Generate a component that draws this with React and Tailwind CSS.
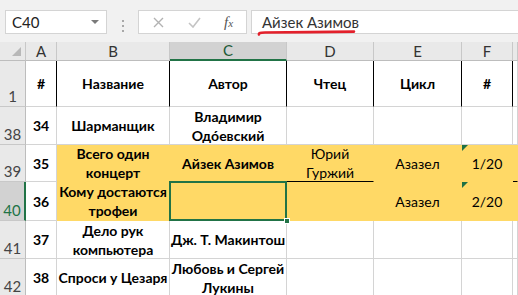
import React from "react";

const FONT = { fontFamily: "Lato, 'Liberation Sans', sans-serif" };

const Cell = ({ children, bold, yellow, r, b, className = "" }) => (
  <div
    className={`flex items-center justify-center text-center whitespace-nowrap text-[14px] leading-[19px] text-black border-r border-b ${
      yellow ? "bg-[#ffd966]" : "bg-white"
    } ${bold ? "font-bold" : "font-normal"} ${r} ${b} ${className}`}
  >
    {children}
  </div>
);

const ColHead = ({ children, active }) => (
  <div
    className={`flex items-center justify-center text-[15px] border-r border-r-[#c8c8c8] ${
      active
        ? "bg-[#d2d2d2] border-b-2 border-b-[#217346] text-[#1c5a36]"
        : "bg-[#e9e9e9] border-b border-b-[#bdbdbd] text-[#333]"
    }`}
  >
    {children}
  </div>
);

const RowHead = ({ children, active }) => (
  <div
    className={`flex items-end justify-center pb-[1px] text-[15px] leading-[18px] border-b border-b-[#c8c8c8] ${
      active
        ? "bg-[#d2d2d2] border-r-2 border-r-[#217346] text-[#217346]"
        : "bg-[#e9e9e9] border-r border-r-[#bdbdbd] text-[#444]"
    }`}
  >
    {children}
  </div>
);

const Flag = () => (
  <span className="absolute left-0 top-0 w-0 h-0 border-t-[6px] border-t-[#1e7145] border-r-[6px] border-r-transparent" />
);

const G = "border-r-[#d4d4d4]";
const GB = "border-b-[#d4d4d4]";
const Y = "border-r-[#ffd966]";
const YB = "border-b-[#ffd966]";

export default function App() {
  return (
    <div className="w-[518px] h-[295px] overflow-hidden bg-[#f1f1f1]" style={FONT}>
      {/* formula bar */}
      <div className="h-[42px] flex pt-[10px] pl-[5px]">
        <div className="w-[102px] h-[24px] bg-white border border-[#d4d4d4] flex items-center justify-between pl-[6px] pr-[7px]">
          <span className="text-[15px] text-[#222]">C40</span>
          <span className="w-0 h-0 border-l-[4px] border-r-[4px] border-t-[4px] border-l-transparent border-r-transparent border-t-[#7a7a7a]" />
        </div>
        <div className="w-[31px] flex flex-col items-center justify-center gap-[3px]">
          <span className="w-[2px] h-[2px] bg-[#a8a8a8]" />
          <span className="w-[2px] h-[2px] bg-[#a8a8a8]" />
          <span className="w-[2px] h-[2px] bg-[#a8a8a8]" />
        </div>
        <div className="w-[109px] h-[24px] bg-white border border-[#d4d4d4] flex items-center">
          <div className="w-[38px] flex justify-center">
            <svg width="11" height="11" viewBox="0 0 11 11">
              <path d="M1 1L10 10M10 1L1 10" stroke="#b2b2b2" strokeWidth="1.4" />
            </svg>
          </div>
          <div className="w-[34px] flex justify-center">
            <svg width="13" height="11" viewBox="0 0 13 11">
              <path d="M1 6L5 10L12 1" stroke="#c4c4c4" strokeWidth="1.6" fill="none" />
            </svg>
          </div>
          <div className="w-[35px] flex justify-center">
            <span
              className="italic text-[15px] text-[#555] leading-none"
              style={{ fontFamily: "'Liberation Serif', serif" }}
            >
              f<span className="text-[11px]">x</span>
            </span>
          </div>
        </div>
        <div className="relative flex-1 ml-[4px] h-[24px] bg-white border-y border-l border-[#d4d4d4] flex items-center pl-[10px]">
          <span className="text-[15px] text-[#333]">Айзек Азимов</span>
          <svg className="absolute left-[5px] top-[18px]" width="100" height="8" viewBox="0 0 100 8">
            <path
              d="M2 5.5C1.5 4 3 3.6 8 3.5C35 3.2 70 3 97 2.6"
              stroke="#e3202b"
              strokeWidth="2.6"
              strokeLinecap="round"
              fill="none"
            />
          </svg>
        </div>
      </div>

      {/* sheet */}
      <div className="grid grid-cols-[26px_31px_113px_117px_87px_88px_51px_1fr] grid-rows-[19px_46px_38px_37px_39px_38px_38px]">
        {/* column headers */}
        <div className="relative bg-[#e9e9e9] border-r border-r-[#c8c8c8] border-b border-b-[#bdbdbd]">
          <span className="absolute right-[4px] bottom-[4px] w-0 h-0 border-l-[9px] border-l-transparent border-b-[9px] border-b-[#b8b8b8]" />
        </div>
        <ColHead>A</ColHead>
        <ColHead>B</ColHead>
        <ColHead active>C</ColHead>
        <ColHead>D</ColHead>
        <ColHead>E</ColHead>
        <ColHead>F</ColHead>
        <ColHead />

        {/* row 1 */}
        <RowHead>1</RowHead>
        <Cell bold r="border-r-black" b={GB}>#</Cell>
        <Cell bold r="border-r-black" b={GB}>Название</Cell>
        <Cell bold r="border-r-black" b={GB}>Автор</Cell>
        <Cell bold r="border-r-black" b={GB}>Чтец</Cell>
        <Cell bold r="border-r-black" b={GB}>Цикл</Cell>
        <Cell bold r="border-r-black" b={GB}>#</Cell>
        <Cell r={G} b={GB} />

        {/* row 38 */}
        <RowHead>38</RowHead>
        <Cell bold r={G} b={GB}>34</Cell>
        <Cell bold r={G} b={GB}>Шарманщик</Cell>
        <Cell bold r={G} b={GB}>Владимир<br />Одо́евский</Cell>
        <Cell r={G} b={GB} />
        <Cell r={G} b={GB} />
        <Cell r={G} b={GB} />
        <Cell r={G} b={GB} />

        {/* row 39 */}
        <RowHead>39</RowHead>
        <Cell bold r={G} b={GB}>35</Cell>
        <Cell bold yellow r={Y} b={YB}>Всего один<br />концерт</Cell>
        <Cell bold yellow r={Y} b={YB}>Айзек Азимов</Cell>
        <Cell yellow r={Y} b="border-b-black">Юрий<br />Гуржий</Cell>
        <Cell yellow r={Y} b={YB}>Азазел</Cell>
        <Cell yellow r={Y} b={YB} className="relative">
          <Flag />
          1/20
        </Cell>
        <Cell yellow r={Y} b="border-b-black" />

        {/* row 40 */}
        <RowHead active>40</RowHead>
        <Cell bold r={G} b={GB}>36</Cell>
        <Cell bold yellow r={Y} b={YB}>Кому достаются<br />трофеи</Cell>
        <Cell yellow r={Y} b={YB} className="relative">
          <span className="absolute left-[-1px] top-[-1px] right-[-1px] bottom-[-1px] border-2 border-[#217346]" />
          <span className="absolute right-[-4px] bottom-[-4px] w-[6px] h-[6px] bg-[#217346] border border-white" />
        </Cell>
        <Cell yellow r={Y} b={YB} />
        <Cell yellow r={Y} b={YB}>Азазел</Cell>
        <Cell yellow r={Y} b={YB} className="relative">
          <Flag />
          2/20
        </Cell>
        <Cell yellow r={Y} b={YB} />

        {/* row 41 */}
        <RowHead>41</RowHead>
        <Cell bold r={G} b={GB}>37</Cell>
        <Cell bold r={G} b={GB}>Дело рук<br />компьютера</Cell>
        <Cell bold r={G} b={GB}>Дж. Т. Макинтош</Cell>
        <Cell r={G} b={GB} />
        <Cell r={G} b={GB} />
        <Cell r={G} b={GB} />
        <Cell r={G} b={GB} />

        {/* row 42 */}
        <RowHead>42</RowHead>
        <Cell bold r={G} b={GB}>38</Cell>
        <Cell bold r={G} b={GB}>Спроси у Цезаря</Cell>
        <Cell bold r={G} b={GB}>Любовь и Сергей<br />Лукины</Cell>
        <Cell r={G} b={GB} />
        <Cell r={G} b={GB} />
        <Cell r={G} b={GB} />
        <Cell r={G} b={GB} />
      </div>
    </div>
  );
}
